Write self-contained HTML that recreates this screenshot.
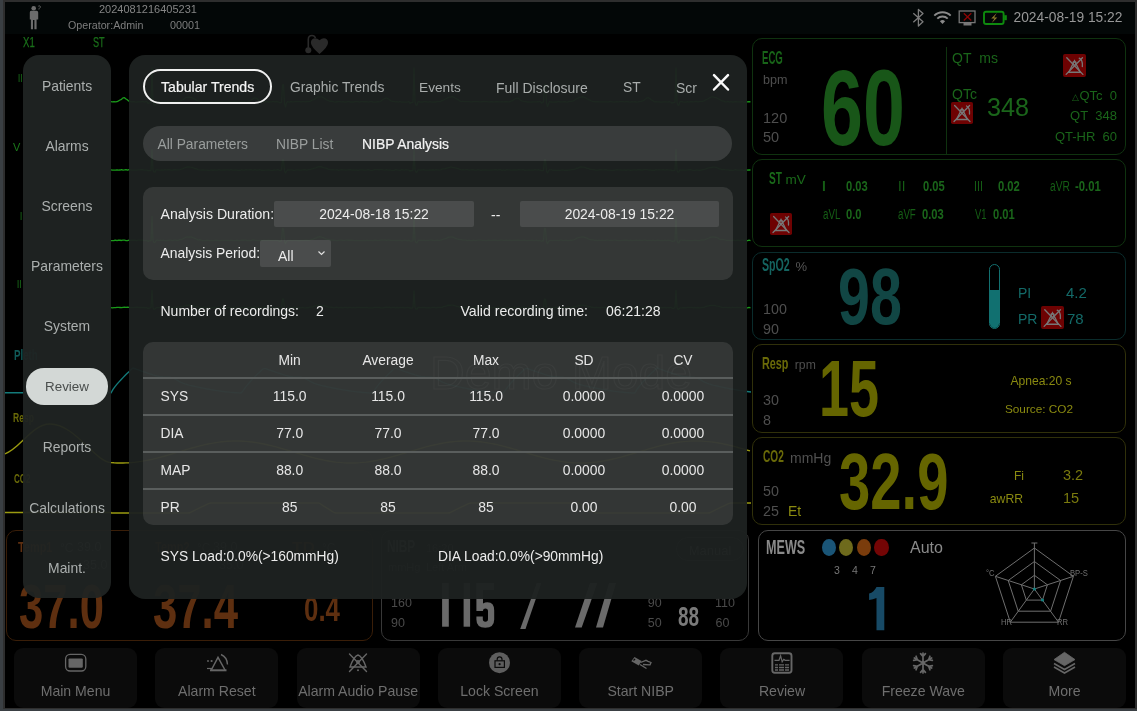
<!DOCTYPE html><html><head><meta charset="utf-8"><style>
html,body{margin:0;padding:0;width:1137px;height:711px;overflow:hidden;background:#2e2e2e;font-family:'Liberation Sans',sans-serif}
.t{position:absolute;white-space:nowrap;line-height:1}
.b{position:absolute;box-sizing:border-box}
svg{position:absolute;overflow:visible}
</style></head><body><div style="position:absolute;left:0;top:0;width:1137px;height:711px;overflow:hidden;will-change:transform">
<div class="b" style="left:0px;top:0px;width:3px;height:711px;background:#3a3f43"></div>
<div class="b" style="left:0px;top:709px;width:1137px;height:2px;background:#3a3f43"></div>
<div class="b" style="left:5px;top:2px;width:1130px;height:706px;background:#000"></div>
<div class="b" style="left:5px;top:2px;width:1130px;height:32px;background:#030707"></div>
<svg style="left:0;top:0" width="1137" height="40"><circle cx="33.7" cy="8.2" r="2.3" fill="#6c6c6c"/><path d="M31 10.8H36.6Q38.2 10.8 38.2 12.4V19.6H36.6V29.3H34.4V20H33V29.3H30.9V19.6H29.8V12.4Q29.8 10.8 31 10.8Z" fill="#6c6c6c"/><path d="M38.3 6.2q1.2-0.8 2 0.2q0.4 1-0.8 1.8q-0.6 0.4-0.6 1.2" stroke="#6c6c6c" stroke-width="0.9" fill="none"/></svg>
<div class="t" style="left:99.0px;top:4.0px;font-size:11px;color:#858585;font-weight:400;">2024081216405231</div>
<div class="t" style="left:68.0px;top:19.8px;font-size:10.7px;color:#7e7e7e;font-weight:400;">Operator:Admin</div>
<div class="t" style="left:170.0px;top:19.7px;font-size:10.8px;color:#7e7e7e;font-weight:400;">00001</div>
<div class="t" style="left:1013.5px;top:11.4px;font-size:13.8px;color:#979797;font-weight:400;">2024-08-19 15:22</div>
<svg style="left:0;top:0" width="1137" height="40"><path d="M913.3 13.2L923 21.8 918.4 26V9.4L923 13.6 913.3 22.3" stroke="#7c7c7c" stroke-width="1.3" fill="none" stroke-linejoin="round"/><path d="M934.3 15.6a11.6 11.6 0 0 1 16.4 0" stroke="#8a8a8a" stroke-width="1.9" fill="none"/><path d="M937.3 18.7a7.3 7.3 0 0 1 10.4 0" stroke="#8a8a8a" stroke-width="1.9" fill="none"/><path d="M939.9 21.3a3.6 3.6 0 0 1 5.2 0l-2.6 2.7z" fill="#8a8a8a"/><rect x="959.2" y="11" width="15.8" height="11.6" fill="none" stroke="#777" stroke-width="1.3"/><rect x="963.5" y="23" width="8" height="2.5" fill="#777"/><path d="M963.8 13.3l7.5 7.2M971.3 13.3l-7.5 7.2" stroke="#8c0505" stroke-width="1.3"/><rect x="984" y="11.7" width="19.6" height="12.3" rx="2" fill="none" stroke="#0e8a0e" stroke-width="1.9"/><rect x="1004.2" y="15.2" width="2.6" height="5" fill="#0e8a0e"/><path d="M996.8 13l-5.6 5.6h3.3l-2.8 4.4 5.6-5.6h-3.2z" fill="#8e7a2a"/></svg>
<svg style="left:0;top:0" width="400" height="60"><path d="M319.5 40.2Q316.5 37.5 313.5 38.5Q310.8 39.5 310.9 43Q311.2 47 319.5 53.9Q327.8 47 328 43Q328.2 39.5 325.5 38.5Q322.5 37.5 319.5 40.2Z" fill="#2a2a2a"/><path d="M308.3 50V39.5Q308.3 35.5 312 35.5Q314.5 35.5 315.5 38" stroke="#2a2a2a" stroke-width="1.6" fill="none"/><circle cx="308.3" cy="50.3" r="3" fill="#2a2a2a"/></svg>
<div class="t" style="left:22.8px;top:34.9px;font-size:14.1px;color:#1a701a;font-weight:400;transform:scaleX(0.682);transform-origin:0 0;-webkit-text-stroke:0.25px #1a701a">X1</div>
<div class="t" style="left:92.6px;top:34.9px;font-size:14.1px;color:#1a701a;font-weight:400;transform:scaleX(0.645);transform-origin:0 0;-webkit-text-stroke:0.25px #1a701a">ST</div>
<svg style="left:0;top:0" width="760" height="711"><g fill="none" stroke-linejoin="round"><path d="M111.0 101.62L112.5 101.83L114.0 101.70L115.5 101.83L117.0 101.70L118.5 100.89L120.0 99.99L121.5 99.33L123.0 97.87L124.5 97.68L126.0 99.03L127.5 99.92L129.0 101.20L130.5 101.50L132.0 101.82L133.5 101.54L135.0 101.89L136.5 102.06L138.0 101.82L139.5 101.97L141.0 101.92L142.5 101.49L144.0 101.98L145.0 101.86L146.0 101.66L147.0 101.47L148.0 103.56L149.0 102.78L150.0 102.95L151.0 102.07L152.0 67.95L153.0 102.09L154.0 105.06L155.0 105.34L156.0 101.76L157.0 102.10L158.0 102.07L159.0 101.52L160.5 101.55L162.0 101.60L163.5 102.13L165.0 101.76L166.5 101.89L168.0 101.66L169.5 101.80L171.0 101.71L172.5 101.68L174.0 101.81L175.5 101.74L177.0 101.82L178.5 101.40L180.0 101.14L181.5 100.46L183.0 99.75L184.5 98.61L186.0 97.40L187.5 97.28L189.0 97.13L190.5 97.31L192.0 97.69L193.5 98.64L195.0 99.20L196.5 100.45L198.0 100.89L199.5 101.12L201.0 101.23L202.5 101.93L204.0 102.09L205.5 101.49L207.0 102.00L208.5 101.74L210.0 101.55L211.5 101.66L213.0 101.99L214.5 102.06L216.0 101.48L217.5 101.88L219.0 101.48L220.5 101.95L222.0 101.68L223.5 102.07L225.0 102.14L226.5 101.80L228.0 102.15L229.5 101.67L231.0 101.50L232.5 101.87L234.0 101.47L235.5 101.59L237.0 101.74L238.5 101.88L240.0 101.56L241.5 101.48L243.0 102.06L244.5 101.67L246.0 102.10L247.5 101.96L249.0 101.29L250.5 100.64L252.0 99.53L253.5 98.43L255.0 97.87L256.5 98.37L258.0 99.60L259.5 100.98L261.0 101.38L262.5 101.63L264.0 101.93L265.5 101.61L267.0 101.66L268.5 102.13L270.0 101.81L271.5 101.83L273.0 101.46L274.5 101.74L275.5 101.86L276.5 101.46L277.5 101.88L278.5 101.89L279.5 102.74L280.5 102.64L281.5 102.28L282.5 84.93L283.5 84.70L284.5 103.61L285.5 106.97L286.5 103.13L287.5 101.49L288.5 101.92L289.5 102.12L290.5 101.63L292.0 101.77L293.5 101.86L295.0 101.67L296.5 101.70L298.0 101.67L299.5 101.71L301.0 101.86L302.5 101.65L304.0 101.69L305.5 101.92L307.0 101.31L308.5 101.51L310.0 101.32L311.5 100.52L313.0 99.77L314.5 99.32L316.0 98.01L317.5 97.18L319.0 96.86L320.5 96.96L322.0 96.91L323.5 97.78L325.0 98.68L326.5 99.92L328.0 100.40L329.5 101.26L331.0 101.15L332.5 101.48L334.0 101.81L335.5 102.03L337.0 101.75L338.5 101.60L340.0 101.53L341.5 101.82L343.0 101.58L344.5 102.01L346.0 102.04L347.5 101.58L349.0 101.65L350.5 102.02L352.0 101.90L353.5 102.01L355.0 101.69L356.5 101.54L358.0 101.65L359.5 102.01L361.0 101.64L362.5 101.69L364.0 101.74L365.5 101.74L367.0 101.74L368.5 102.09L370.0 101.56L371.5 101.45L373.0 102.11L374.5 102.06L376.0 102.13L377.5 101.71L379.0 101.93L380.5 101.50L382.0 100.13L383.5 99.27L385.0 98.28L386.5 97.98L388.0 98.70L389.5 99.79L391.0 100.85L392.5 101.32L394.0 101.42L395.5 101.85L397.0 101.65L398.5 102.02L400.0 101.48L401.5 102.08L403.0 101.94L404.5 102.10L406.0 102.08L407.0 102.08L408.0 101.85L409.0 101.46L410.0 103.47L411.0 102.57L412.0 102.66L413.0 101.91L414.0 67.82L415.0 101.74L416.0 105.44L417.0 105.21L418.0 101.69L419.0 101.63L420.0 102.05L421.0 101.78L422.5 102.00L424.0 101.70L425.5 101.59L427.0 101.82L428.5 102.02L430.0 101.57L431.5 102.00L433.0 102.09L434.5 101.99L436.0 101.98L437.5 101.33L439.0 101.63L440.5 101.53L442.0 100.53L443.5 100.05L445.0 99.24L446.5 98.51L448.0 97.59L449.5 97.01L451.0 96.99L452.5 96.68L454.0 97.33L455.5 98.23L457.0 99.14L458.5 99.91L460.0 101.17L461.5 101.52L463.0 101.25L464.5 101.68L466.0 101.62L467.5 101.65L469.0 101.69L470.5 101.90L472.0 101.86L473.5 101.70L475.0 101.58L476.5 101.68L478.0 101.54L479.5 101.84L481.0 101.95L482.5 101.72L484.0 101.51L485.5 101.57L487.0 101.71L488.5 101.87L490.0 102.00L491.5 101.72L493.0 102.01L494.5 101.89L496.0 101.75L497.5 101.71L499.0 101.80L500.5 101.94L502.0 101.74L503.5 101.94L505.0 101.77L506.5 101.62L508.0 101.80L509.5 101.82L511.0 101.08L512.5 100.62L514.0 99.47L515.5 98.59L517.0 98.11L518.5 98.24L520.0 99.80L521.5 100.88L523.0 101.21L524.5 101.66L526.0 101.51L527.5 102.02L529.0 101.91L530.5 102.07L532.0 102.00L533.5 101.92L535.0 101.96L536.5 101.84L537.5 101.52L538.5 101.86L539.5 101.45L540.5 101.55L541.5 103.24L542.5 102.23L543.5 102.01L544.5 84.52L545.5 85.07L546.5 103.24L547.5 106.47L548.5 103.71L549.5 101.53L550.5 102.04L551.5 101.92L552.5 102.04L554.0 102.12L555.5 101.86L557.0 102.01L558.5 101.48L560.0 101.99L561.5 101.81L563.0 101.95L564.5 101.52L566.0 101.95L567.5 102.04L569.0 101.33L570.5 101.34L572.0 101.20L573.5 100.89L575.0 99.78L576.5 98.88L578.0 98.02L579.5 97.48L581.0 97.08L582.5 96.75L584.0 97.10L585.5 97.83L587.0 98.69L588.5 99.63L590.0 100.15L591.5 101.01L593.0 101.71L594.5 101.53L596.0 101.88L597.5 101.53L599.0 101.92L600.5 101.97L602.0 101.92L603.5 101.81L605.0 101.79L606.5 101.90L608.0 102.08L609.5 101.55L611.0 101.52L612.5 101.97L614.0 102.09L615.5 101.81L617.0 101.76L618.5 101.95L620.0 101.58L621.5 101.64L623.0 101.59L624.5 101.86L626.0 101.67L627.5 101.61L629.0 101.93L630.5 102.12L632.0 101.66L633.5 101.94L635.0 101.74L636.5 102.05L638.0 101.85L639.5 101.59L641.0 101.42L642.5 100.86L644.0 100.31L645.5 99.01L647.0 97.81L648.5 97.76L650.0 98.56L651.5 100.13L653.0 100.71L654.5 101.86L656.0 101.71L657.5 101.86L659.0 101.78L660.5 102.03L662.0 102.03L663.5 101.84L665.0 101.79L666.5 101.95L668.0 102.05L669.0 101.73L670.0 101.96L671.0 102.12L672.0 103.28L673.0 102.61L674.0 102.61L675.0 101.95L676.0 67.92L677.0 102.12L678.0 105.38L679.0 104.95L680.0 101.58L681.0 101.63L682.0 101.58L683.0 101.94L684.5 102.05L686.0 102.08L687.5 101.63L689.0 102.06L690.5 101.67L692.0 101.75L693.5 101.96L695.0 101.50L696.5 101.50L698.0 101.98L699.5 101.53L701.0 101.44L702.5 101.33L704.0 100.97L705.5 99.87L707.0 99.29L708.5 98.45L710.0 97.63L711.5 96.82L713.0 96.86L714.5 97.34L716.0 97.56L717.5 98.52L719.0 99.14L720.5 100.06L722.0 100.96L723.5 101.00L725.0 101.81L726.5 101.96L728.0 101.47L729.5 102.09L731.0 101.71L732.5 101.99L734.0 101.98L735.5 101.66L737.0 101.92L738.5 101.91L740.0 102.01L741.5 101.64L743.0 101.98L744.5 102.12L746.0 101.92L747.5 101.83L749.0 101.53L750.5 101.80" stroke="#1a9a1a" stroke-width="1.3"/><path d="M111.0 169.90L112.5 170.15L114.0 170.12L115.5 170.04L117.0 169.77L118.5 170.07L120.0 170.02L121.5 169.64L123.0 170.09L124.5 169.91L126.0 169.58L127.5 170.21L129.0 169.71L130.5 169.87L132.0 170.15L133.5 170.07L135.0 170.04L136.5 170.10L138.0 169.97L139.5 169.87L141.0 169.77L142.5 169.70L144.0 170.15L145.0 170.18L146.0 170.03L147.0 170.17L148.0 170.80L149.0 170.44L150.0 170.52L151.0 170.26L152.0 149.28L153.0 170.00L154.0 171.82L155.0 172.19L156.0 169.90L157.0 169.88L158.0 169.93L159.0 170.03L160.5 170.19L162.0 169.90L163.5 170.24L165.0 169.73L166.5 169.84L168.0 169.72L169.5 169.73L171.0 170.19L172.5 170.15L174.0 169.75L175.5 169.71L177.0 169.78L178.5 169.85L180.0 169.65L181.5 169.22L183.0 168.63L184.5 167.77L186.0 167.43L187.5 166.92L189.0 167.02L190.5 167.18L192.0 167.29L193.5 167.84L195.0 168.76L196.5 168.72L198.0 169.64L199.5 169.96L201.0 170.16L202.5 169.85L204.0 170.01L205.5 170.05L207.0 170.09L208.5 170.33L210.0 170.13L211.5 169.86L213.0 170.25L214.5 169.99L216.0 170.07L217.5 170.16L219.0 169.65L220.5 170.19L222.0 170.11L223.5 169.99L225.0 170.02L226.5 169.97L228.0 169.79L229.5 170.02L231.0 169.68L232.5 170.00L234.0 170.10L235.5 169.96L237.0 170.05L238.5 170.32L240.0 170.27L241.5 169.74L243.0 170.20L244.5 170.09L246.0 169.68L247.5 169.90L249.0 169.79L250.5 169.65L252.0 169.91L253.5 170.13L255.0 169.68L256.5 170.09L258.0 170.02L259.5 169.69L261.0 170.23L262.5 170.06L264.0 170.30L265.5 170.15L267.0 170.17L268.5 169.89L270.0 170.21L271.5 170.30L273.0 170.25L274.5 169.96L275.5 170.18L276.5 169.99L277.5 169.73L278.5 169.68L279.5 170.45L280.5 170.24L281.5 170.06L282.5 159.80L283.5 159.94L284.5 171.03L285.5 172.95L286.5 171.10L287.5 169.86L288.5 169.98L289.5 170.18L290.5 169.93L292.0 169.78L293.5 170.28L295.0 170.15L296.5 169.91L298.0 169.91L299.5 170.02L301.0 170.07L302.5 169.80L304.0 169.64L305.5 169.76L307.0 170.10L308.5 169.55L310.0 169.58L311.5 169.10L313.0 168.69L314.5 168.15L316.0 167.77L317.5 167.13L319.0 166.73L320.5 166.74L322.0 167.00L323.5 167.66L325.0 167.89L326.5 168.40L328.0 169.15L329.5 169.46L331.0 169.89L332.5 169.56L334.0 169.88L335.5 169.91L337.0 169.66L338.5 170.32L340.0 169.80L341.5 169.72L343.0 169.98L344.5 169.77L346.0 170.09L347.5 169.89L349.0 169.74L350.5 169.69L352.0 170.16L353.5 169.84L355.0 170.20L356.5 169.98L358.0 170.30L359.5 169.86L361.0 169.82L362.5 169.84L364.0 170.22L365.5 170.09L367.0 169.89L368.5 169.72L370.0 170.13L371.5 170.33L373.0 170.06L374.5 169.65L376.0 169.67L377.5 169.71L379.0 169.76L380.5 169.65L382.0 169.61L383.5 169.97L385.0 170.09L386.5 169.59L388.0 170.18L389.5 169.89L391.0 170.17L392.5 170.28L394.0 170.30L395.5 169.67L397.0 169.86L398.5 170.07L400.0 170.31L401.5 169.71L403.0 169.86L404.5 170.24L406.0 169.73L407.0 169.92L408.0 169.88L409.0 170.13L410.0 171.20L411.0 170.37L412.0 170.77L413.0 170.16L414.0 149.83L415.0 170.04L416.0 172.30L417.0 171.90L418.0 169.94L419.0 169.81L420.0 170.20L421.0 169.99L422.5 169.84L424.0 169.77L425.5 170.15L427.0 170.07L428.5 170.15L430.0 169.92L431.5 169.99L433.0 169.75L434.5 170.14L436.0 169.64L437.5 169.90L439.0 170.02L440.5 169.81L442.0 169.14L443.5 168.86L445.0 168.80L446.5 168.12L448.0 167.77L449.5 167.40L451.0 166.96L452.5 167.41L454.0 167.67L455.5 167.90L457.0 168.47L458.5 168.75L460.0 169.36L461.5 170.00L463.0 169.56L464.5 169.98L466.0 169.70L467.5 169.70L469.0 170.10L470.5 169.82L472.0 169.68L473.5 169.76L475.0 170.10L476.5 170.06L478.0 169.66L479.5 169.81L481.0 170.33L482.5 169.80L484.0 170.04L485.5 169.94L487.0 170.20L488.5 170.07L490.0 170.20L491.5 170.02L493.0 169.78L494.5 169.77L496.0 169.71L497.5 170.23L499.0 169.73L500.5 169.67L502.0 170.33L503.5 169.79L505.0 170.28L506.5 169.71L508.0 169.97L509.5 169.80L511.0 170.21L512.5 170.02L514.0 169.99L515.5 170.01L517.0 170.06L518.5 169.72L520.0 169.96L521.5 169.91L523.0 169.71L524.5 170.23L526.0 170.06L527.5 170.22L529.0 169.79L530.5 170.03L532.0 169.97L533.5 170.16L535.0 169.70L536.5 169.89L537.5 169.99L538.5 169.70L539.5 170.04L540.5 170.16L541.5 170.70L542.5 170.55L543.5 170.37L544.5 159.60L545.5 159.70L546.5 171.35L547.5 172.88L548.5 170.95L549.5 169.71L550.5 169.80L551.5 169.77L552.5 170.30L554.0 170.16L555.5 170.26L557.0 170.34L558.5 170.08L560.0 170.30L561.5 170.02L563.0 169.94L564.5 170.31L566.0 170.27L567.5 170.27L569.0 169.89L570.5 169.99L572.0 169.55L573.5 169.66L575.0 169.19L576.5 168.24L578.0 168.14L579.5 167.14L581.0 166.78L582.5 167.17L584.0 167.09L585.5 167.68L587.0 168.30L588.5 168.41L590.0 169.36L591.5 169.37L593.0 169.70L594.5 169.77L596.0 170.11L597.5 170.15L599.0 169.84L600.5 169.72L602.0 169.86L603.5 169.94L605.0 169.70L606.5 169.76L608.0 170.18L609.5 170.14L611.0 170.33L612.5 170.34L614.0 170.26L615.5 169.91L617.0 169.76L618.5 169.87L620.0 169.97L621.5 170.02L623.0 170.03L624.5 169.90L626.0 170.25L627.5 169.85L629.0 169.97L630.5 170.27L632.0 170.21L633.5 169.86L635.0 169.82L636.5 170.21L638.0 169.66L639.5 169.74L641.0 170.01L642.5 169.99L644.0 169.69L645.5 169.55L647.0 169.60L648.5 169.99L650.0 169.82L651.5 170.24L653.0 170.16L654.5 170.32L656.0 169.67L657.5 169.78L659.0 169.66L660.5 169.95L662.0 169.89L663.5 169.69L665.0 170.03L666.5 169.72L668.0 169.87L669.0 169.82L670.0 170.21L671.0 169.94L672.0 170.73L673.0 170.28L674.0 170.55L675.0 170.09L676.0 149.72L677.0 170.29L678.0 172.22L679.0 171.82L680.0 169.74L681.0 170.18L682.0 170.20L683.0 170.01L684.5 170.23L686.0 170.04L687.5 169.85L689.0 169.77L690.5 169.66L692.0 170.10L693.5 170.28L695.0 170.28L696.5 169.97L698.0 170.09L699.5 170.23L701.0 170.06L702.5 169.76L704.0 169.37L705.5 169.06L707.0 168.33L708.5 167.79L710.0 167.63L711.5 167.48L713.0 167.03L714.5 167.07L716.0 167.40L717.5 167.98L719.0 168.77L720.5 169.01L722.0 169.75L723.5 169.44L725.0 169.71L726.5 169.94L728.0 169.91L729.5 170.23L731.0 170.23L732.5 170.30L734.0 170.08L735.5 169.67L737.0 170.05L738.5 170.03L740.0 169.99L741.5 169.85L743.0 170.15L744.5 170.29L746.0 169.72L747.5 170.12L749.0 169.91L750.5 170.01" stroke="#1a9a1a" stroke-width="1.3"/><path d="M111.0 240.68L112.5 240.72L114.0 240.50L115.5 240.18L117.0 240.69L118.5 240.15L120.0 240.24L121.5 240.49L123.0 240.08L124.5 240.04L126.0 240.56L127.5 240.62L129.0 240.23L130.5 240.31L132.0 240.24L133.5 240.14L135.0 240.23L136.5 240.74L138.0 240.11L139.5 240.21L141.0 240.19L142.5 240.11L144.0 240.42L145.0 240.57L146.0 240.64L147.0 240.49L148.0 241.67L149.0 240.75L150.0 240.95L151.0 240.72L152.0 216.30L153.0 240.24L154.0 242.72L155.0 242.57L156.0 240.43L157.0 240.08L158.0 240.22L159.0 240.72L160.5 240.15L162.0 240.68L163.5 240.17L165.0 240.74L166.5 240.52L168.0 240.50L169.5 240.15L171.0 240.08L172.5 240.57L174.0 240.14L175.5 240.10L177.0 240.44L178.5 240.29L180.0 239.41L181.5 239.61L183.0 238.75L184.5 238.00L186.0 237.21L187.5 236.98L189.0 237.24L190.5 236.90L192.0 237.23L193.5 237.84L195.0 238.46L196.5 239.19L198.0 240.02L199.5 239.73L201.0 240.00L202.5 240.62L204.0 240.71L205.5 240.72L207.0 240.22L208.5 240.30L210.0 240.72L211.5 240.39L213.0 240.54L214.5 240.27L216.0 240.06L217.5 240.29L219.0 240.57L220.5 240.60L222.0 240.45L223.5 240.37L225.0 240.43L226.5 240.36L228.0 240.42L229.5 240.63L231.0 240.19L232.5 240.47L234.0 240.70L235.5 240.64L237.0 240.18L238.5 240.72L240.0 240.64L241.5 240.17L243.0 240.24L244.5 240.19L246.0 240.09L247.5 240.73L249.0 240.32L250.5 240.60L252.0 240.02L253.5 239.89L255.0 240.46L256.5 240.43L258.0 240.63L259.5 240.47L261.0 240.40L262.5 240.58L264.0 240.11L265.5 240.43L267.0 240.36L268.5 240.15L270.0 240.47L271.5 240.28L273.0 240.40L274.5 240.31L275.5 240.27L276.5 240.30L277.5 240.47L278.5 240.74L279.5 241.58L280.5 241.18L281.5 240.98L282.5 228.35L283.5 228.83L284.5 241.41L285.5 243.64L286.5 241.57L287.5 240.56L288.5 240.29L289.5 240.50L290.5 240.25L292.0 240.73L293.5 240.37L295.0 240.38L296.5 240.42L298.0 240.66L299.5 240.74L301.0 240.42L302.5 240.35L304.0 240.46L305.5 240.05L307.0 240.24L308.5 240.41L310.0 240.14L311.5 239.29L313.0 239.36L314.5 238.43L316.0 238.21L317.5 237.23L319.0 236.77L320.5 236.95L322.0 237.44L323.5 237.63L325.0 238.56L326.5 239.07L328.0 239.36L329.5 239.71L331.0 240.11L332.5 240.19L334.0 240.25L335.5 240.48L337.0 240.65L338.5 240.46L340.0 240.15L341.5 240.20L343.0 240.31L344.5 240.48L346.0 240.15L347.5 240.11L349.0 240.27L350.5 240.25L352.0 240.07L353.5 240.43L355.0 240.69L356.5 240.42L358.0 240.57L359.5 240.63L361.0 240.64L362.5 240.69L364.0 240.36L365.5 240.53L367.0 240.13L368.5 240.67L370.0 240.31L371.5 240.38L373.0 240.67L374.5 240.25L376.0 240.18L377.5 240.62L379.0 240.46L380.5 240.08L382.0 240.00L383.5 240.16L385.0 239.87L386.5 240.44L388.0 240.02L389.5 240.15L391.0 240.28L392.5 240.39L394.0 240.35L395.5 240.49L397.0 240.51L398.5 240.36L400.0 240.12L401.5 240.74L403.0 240.53L404.5 240.11L406.0 240.36L407.0 240.58L408.0 240.74L409.0 240.10L410.0 241.11L411.0 241.09L412.0 241.05L413.0 240.68L414.0 216.83L415.0 240.28L416.0 242.68L417.0 242.79L418.0 240.67L419.0 240.19L420.0 240.32L421.0 240.11L422.5 240.50L424.0 240.07L425.5 240.70L427.0 240.42L428.5 240.45L430.0 240.11L431.5 240.21L433.0 240.37L434.5 240.64L436.0 240.39L437.5 240.16L439.0 240.55L440.5 240.14L442.0 239.75L443.5 239.08L445.0 238.58L446.5 238.36L448.0 237.23L449.5 237.08L451.0 236.98L452.5 236.96L454.0 237.68L455.5 238.37L457.0 238.97L458.5 239.46L460.0 239.52L461.5 239.72L463.0 240.17L464.5 240.18L466.0 240.15L467.5 240.65L469.0 240.20L470.5 240.62L472.0 240.71L473.5 240.13L475.0 240.69L476.5 240.33L478.0 240.20L479.5 240.18L481.0 240.08L482.5 240.40L484.0 240.32L485.5 240.65L487.0 240.63L488.5 240.09L490.0 240.33L491.5 240.32L493.0 240.17L494.5 240.23L496.0 240.23L497.5 240.54L499.0 240.29L500.5 240.13L502.0 240.20L503.5 240.36L505.0 240.45L506.5 240.22L508.0 240.54L509.5 240.19L511.0 240.50L512.5 240.42L514.0 240.06L515.5 240.40L517.0 240.13L518.5 240.25L520.0 240.35L521.5 240.43L523.0 240.34L524.5 240.08L526.0 240.60L527.5 240.65L529.0 240.39L530.5 240.46L532.0 240.24L533.5 240.68L535.0 240.53L536.5 240.21L537.5 240.62L538.5 240.74L539.5 240.29L540.5 240.75L541.5 241.26L542.5 240.70L543.5 240.90L544.5 228.39L545.5 228.66L546.5 241.63L547.5 243.63L548.5 241.59L549.5 240.65L550.5 240.38L551.5 240.43L552.5 240.65L554.0 240.36L555.5 240.39L557.0 240.46L558.5 240.63L560.0 240.19L561.5 240.11L563.0 240.58L564.5 240.43L566.0 240.24L567.5 240.63L569.0 240.56L570.5 240.19L572.0 240.29L573.5 239.83L575.0 239.29L576.5 238.37L578.0 237.53L579.5 237.44L581.0 237.14L582.5 236.81L584.0 237.16L585.5 237.72L587.0 238.12L588.5 239.06L590.0 239.50L591.5 239.77L593.0 239.83L594.5 240.29L596.0 240.21L597.5 240.53L599.0 240.16L600.5 240.32L602.0 240.19L603.5 240.34L605.0 240.45L606.5 240.12L608.0 240.09L609.5 240.39L611.0 240.19L612.5 240.40L614.0 240.17L615.5 240.12L617.0 240.43L618.5 240.70L620.0 240.66L621.5 240.41L623.0 240.33L624.5 240.10L626.0 240.24L627.5 240.27L629.0 240.71L630.5 240.13L632.0 240.71L633.5 240.38L635.0 240.35L636.5 240.23L638.0 240.72L639.5 240.18L641.0 240.44L642.5 240.38L644.0 240.12L645.5 240.07L647.0 240.55L648.5 240.41L650.0 240.41L651.5 240.59L653.0 240.08L654.5 240.53L656.0 240.57L657.5 240.21L659.0 240.37L660.5 240.73L662.0 240.28L663.5 240.58L665.0 240.17L666.5 240.52L668.0 240.24L669.0 240.41L670.0 240.31L671.0 240.66L672.0 241.62L673.0 241.10L674.0 241.23L675.0 240.35L676.0 216.81L677.0 240.23L678.0 242.76L679.0 242.79L680.0 240.32L681.0 240.08L682.0 240.17L683.0 240.50L684.5 240.20L686.0 240.58L687.5 240.40L689.0 240.72L690.5 240.64L692.0 240.56L693.5 240.31L695.0 240.08L696.5 240.43L698.0 240.54L699.5 240.61L701.0 240.01L702.5 239.79L704.0 240.07L705.5 239.46L707.0 238.71L708.5 238.25L710.0 237.24L711.5 237.09L713.0 237.02L714.5 237.13L716.0 237.25L717.5 237.83L719.0 238.81L720.5 239.56L722.0 239.48L723.5 239.69L725.0 239.92L726.5 240.51L728.0 240.29L729.5 240.36L731.0 240.74L732.5 240.48L734.0 240.23L735.5 240.54L737.0 240.05L738.5 240.25L740.0 240.54L741.5 240.17L743.0 240.07L744.5 240.41L746.0 240.28L747.5 240.73L749.0 240.12L750.5 240.61" stroke="#1a9a1a" stroke-width="1.3"/><path d="M111.0 307.52L112.5 307.81L114.0 307.56L115.5 307.72L117.0 307.47L118.5 307.38L120.0 307.49L121.5 307.67L123.0 307.30L124.5 307.21L126.0 307.39L127.5 307.22L129.0 307.43L130.5 307.64L132.0 307.63L133.5 307.67L135.0 307.45L136.5 307.27L138.0 307.27L139.5 307.49L141.0 307.39L142.5 307.65L144.0 307.44L145.0 307.78L146.0 307.67L147.0 307.71L148.0 308.51L149.0 308.12L150.0 308.05L151.0 307.47L152.0 290.29L153.0 307.81L154.0 309.27L155.0 308.99L156.0 307.90L157.0 307.66L158.0 307.69L159.0 307.56L160.5 307.34L162.0 307.95L163.5 307.37L165.0 307.51L166.5 307.95L168.0 307.34L169.5 307.60L171.0 307.58L172.5 307.41L174.0 307.87L175.5 307.48L177.0 307.13L178.5 307.32L180.0 306.77L181.5 306.95L183.0 306.66L184.5 306.23L186.0 305.20L187.5 305.33L189.0 304.96L190.5 305.19L192.0 305.38L193.5 305.81L195.0 306.14L196.5 306.89L198.0 306.83L199.5 307.66L201.0 307.15L202.5 307.86L204.0 307.36L205.5 307.30L207.0 307.77L208.5 307.62L210.0 307.79L211.5 307.61L213.0 307.69L214.5 307.31L216.0 307.72L217.5 307.61L219.0 307.92L220.5 307.25L222.0 307.30L223.5 307.72L225.0 307.90L226.5 307.55L228.0 307.75L229.5 307.64L231.0 307.52L232.5 307.58L234.0 307.67L235.5 307.27L237.0 307.46L238.5 307.77L240.0 307.43L241.5 307.58L243.0 307.43L244.5 307.50L246.0 307.70L247.5 307.76L249.0 307.90L250.5 307.53L252.0 307.28L253.5 307.31L255.0 307.09L256.5 307.24L258.0 307.55L259.5 307.62L261.0 307.40L262.5 307.37L264.0 307.32L265.5 307.37L267.0 307.60L268.5 307.43L270.0 307.87L271.5 307.65L273.0 307.49L274.5 307.55L275.5 307.28L276.5 307.76L277.5 307.78L278.5 307.50L279.5 308.38L280.5 307.82L281.5 307.65L282.5 298.91L283.5 298.89L284.5 308.51L285.5 310.20L286.5 308.59L287.5 307.32L288.5 307.79L289.5 307.58L290.5 307.51L292.0 307.60L293.5 307.55L295.0 307.39L296.5 307.53L298.0 307.70L299.5 307.75L301.0 307.89L302.5 307.38L304.0 307.86L305.5 307.78L307.0 307.67L308.5 307.77L310.0 307.02L311.5 307.22L313.0 306.96L314.5 305.99L316.0 305.86L317.5 305.71L319.0 305.01L320.5 305.36L322.0 305.58L323.5 305.61L325.0 305.85L326.5 306.35L328.0 307.15L329.5 307.15L331.0 307.26L332.5 307.46L334.0 307.85L335.5 307.41L337.0 307.26L338.5 307.91L340.0 307.47L341.5 307.52L343.0 307.93L344.5 307.45L346.0 307.31L347.5 307.87L349.0 307.42L350.5 307.41L352.0 307.91L353.5 307.41L355.0 307.88L356.5 307.48L358.0 307.46L359.5 307.40L361.0 307.63L362.5 307.64L364.0 307.53L365.5 307.61L367.0 307.46L368.5 307.84L370.0 307.90L371.5 307.78L373.0 307.82L374.5 307.30L376.0 307.42L377.5 307.39L379.0 307.35L380.5 307.90L382.0 307.81L383.5 307.75L385.0 307.45L386.5 307.13L388.0 307.39L389.5 307.20L391.0 307.84L392.5 307.42L394.0 307.45L395.5 307.91L397.0 307.39L398.5 307.90L400.0 307.47L401.5 307.72L403.0 307.32L404.5 307.88L406.0 307.53L407.0 307.49L408.0 307.71L409.0 307.67L410.0 308.18L411.0 307.84L412.0 308.15L413.0 307.27L414.0 290.86L415.0 307.49L416.0 309.04L417.0 309.15L418.0 307.33L419.0 307.47L420.0 307.63L421.0 307.53L422.5 307.48L424.0 307.45L425.5 307.59L427.0 307.80L428.5 307.56L430.0 307.79L431.5 307.59L433.0 307.33L434.5 307.36L436.0 307.82L437.5 307.52L439.0 307.39L440.5 307.35L442.0 307.36L443.5 306.72L445.0 306.30L446.5 305.85L448.0 305.18L449.5 305.24L451.0 305.09L452.5 305.21L454.0 305.49L455.5 305.93L457.0 306.55L458.5 306.59L460.0 307.46L461.5 307.07L463.0 307.72L464.5 307.31L466.0 307.78L467.5 307.42L469.0 307.30L470.5 307.63L472.0 307.84L473.5 307.84L475.0 307.86L476.5 307.94L478.0 307.29L479.5 307.52L481.0 307.32L482.5 307.78L484.0 307.57L485.5 307.77L487.0 307.81L488.5 307.95L490.0 307.72L491.5 307.86L493.0 307.63L494.5 307.31L496.0 307.87L497.5 307.31L499.0 307.31L500.5 307.83L502.0 307.45L503.5 307.71L505.0 307.27L506.5 307.40L508.0 307.75L509.5 307.27L511.0 307.59L512.5 307.85L514.0 307.29L515.5 307.57L517.0 307.57L518.5 307.51L520.0 307.67L521.5 307.68L523.0 307.24L524.5 307.38L526.0 307.62L527.5 307.93L529.0 307.40L530.5 307.66L532.0 307.34L533.5 307.84L535.0 307.56L536.5 307.62L537.5 307.72L538.5 307.35L539.5 307.76L540.5 307.81L541.5 308.48L542.5 307.82L543.5 307.66L544.5 298.87L545.5 299.38L546.5 308.39L547.5 310.02L548.5 308.45L549.5 307.74L550.5 307.47L551.5 307.49L552.5 307.79L554.0 307.79L555.5 307.46L557.0 307.30L558.5 307.90L560.0 307.76L561.5 307.67L563.0 307.53L564.5 307.92L566.0 307.54L567.5 307.37L569.0 307.24L570.5 307.33L572.0 307.35L573.5 306.93L575.0 306.99L576.5 306.36L578.0 305.77L579.5 305.51L581.0 305.22L582.5 305.20L584.0 305.29L585.5 305.67L587.0 306.09L588.5 306.78L590.0 306.71L591.5 307.40L593.0 307.25L594.5 307.74L596.0 307.26L597.5 307.57L599.0 307.55L600.5 307.75L602.0 307.39L603.5 307.43L605.0 307.34L606.5 307.64L608.0 307.65L609.5 307.25L611.0 307.37L612.5 307.39L614.0 307.92L615.5 307.57L617.0 307.65L618.5 307.45L620.0 307.71L621.5 307.82L623.0 307.72L624.5 307.25L626.0 307.56L627.5 307.59L629.0 307.28L630.5 307.80L632.0 307.47L633.5 307.46L635.0 307.69L636.5 307.66L638.0 307.60L639.5 307.85L641.0 307.60L642.5 307.46L644.0 307.22L645.5 307.50L647.0 307.32L648.5 307.43L650.0 307.34L651.5 307.16L653.0 307.23L654.5 307.35L656.0 307.31L657.5 307.85L659.0 307.66L660.5 307.42L662.0 307.75L663.5 307.69L665.0 307.29L666.5 307.78L668.0 307.41L669.0 307.95L670.0 307.35L671.0 307.45L672.0 308.17L673.0 308.35L674.0 308.32L675.0 307.66L676.0 290.35L677.0 307.55L678.0 309.41L679.0 308.96L680.0 307.89L681.0 307.84L682.0 307.90L683.0 307.74L684.5 307.68L686.0 307.93L687.5 307.44L689.0 307.46L690.5 307.34L692.0 307.38L693.5 307.81L695.0 307.31L696.5 307.76L698.0 307.50L699.5 307.80L701.0 307.65L702.5 307.47L704.0 307.36L705.5 306.49L707.0 306.24L708.5 305.85L710.0 305.47L711.5 305.33L713.0 305.37L714.5 305.38L716.0 305.82L717.5 306.08L719.0 306.30L720.5 306.81L722.0 307.30L723.5 307.56L725.0 307.38L726.5 307.44L728.0 307.65L729.5 307.40L731.0 307.86L732.5 307.25L734.0 307.70L735.5 307.59L737.0 307.39L738.5 307.65L740.0 307.58L741.5 307.92L743.0 307.87L744.5 307.66L746.0 307.86L747.5 307.87L749.0 307.37L750.5 307.83" stroke="#1a9a1a" stroke-width="1.3"/><path d="M5 392.8H111L111.0 393.00L113.0 389.33L115.0 386.61L117.0 384.16L119.0 381.87L121.0 379.70L123.0 377.61L125.0 375.59L127.0 373.62L129.0 371.71L131.0 369.84L133.0 368.00L135.0 368.73L137.0 369.45L139.0 370.17L141.0 370.87L143.0 371.57L145.0 372.26L147.0 372.93L149.0 373.60L151.0 374.26L153.0 374.89L155.0 375.47L157.0 375.99L159.0 376.40L161.0 376.68L163.0 376.81L165.0 376.84L167.0 376.86L169.0 377.01L171.0 377.41L173.0 378.10L175.0 379.06L177.0 380.15L179.0 381.27L181.0 382.29L183.0 383.16L185.0 383.90L187.0 384.52L189.0 385.07L191.0 385.57L193.0 386.04L195.0 386.49L197.0 386.93L199.0 387.36L201.0 387.77L203.0 388.17L205.0 388.56L207.0 388.94L209.0 389.30L211.0 389.66L213.0 389.99L215.0 390.32L217.0 390.63L219.0 390.93L221.0 391.21L223.0 391.47L225.0 391.72L227.0 391.95L229.0 392.17L231.0 392.36L233.0 392.54L235.0 392.69L237.0 392.82L239.0 392.92L241.0 392.99L243.0 390.89L245.0 387.92L247.0 385.36L249.0 383.00L251.0 380.77L253.0 378.64L255.0 376.59L257.0 374.60L259.0 372.66L261.0 370.77L263.0 368.91L265.0 368.37L267.0 369.09L269.0 369.81L271.0 370.52L273.0 371.22L275.0 371.91L277.0 372.60L279.0 373.27L281.0 373.93L283.0 374.57L285.0 375.19L287.0 375.74L289.0 376.21L291.0 376.56L293.0 376.76L295.0 376.83L297.0 376.84L299.0 376.91L301.0 377.18L303.0 377.72L305.0 378.55L307.0 379.60L309.0 380.72L311.0 381.79L313.0 382.74L315.0 383.55L317.0 384.22L319.0 384.80L321.0 385.32L323.0 385.81L325.0 386.27L327.0 386.71L329.0 387.14L331.0 387.56L333.0 387.97L335.0 388.37L337.0 388.75L339.0 389.12L341.0 389.48L343.0 389.83L345.0 390.16L347.0 390.48L349.0 390.78L351.0 391.07L353.0 391.34L355.0 391.60L357.0 391.84L359.0 392.06L361.0 392.27L363.0 392.45L365.0 392.62L367.0 392.76L369.0 392.87L371.0 392.96L373.0 393.00L375.0 389.33L377.0 386.61L379.0 384.16L381.0 381.87L383.0 379.70L385.0 377.61L387.0 375.59L389.0 373.62L391.0 371.71L393.0 369.84L395.0 368.00L397.0 368.73L399.0 369.45L401.0 370.17L403.0 370.87L405.0 371.57L407.0 372.26L409.0 372.93L411.0 373.60L413.0 374.26L415.0 374.89L417.0 375.47L419.0 375.99L421.0 376.40L423.0 376.68L425.0 376.81L427.0 376.84L429.0 376.86L431.0 377.01L433.0 377.41L435.0 378.10L437.0 379.06L439.0 380.15L441.0 381.27L443.0 382.29L445.0 383.16L447.0 383.90L449.0 384.52L451.0 385.07L453.0 385.57L455.0 386.04L457.0 386.49L459.0 386.93L461.0 387.36L463.0 387.77L465.0 388.17L467.0 388.56L469.0 388.94L471.0 389.30L473.0 389.66L475.0 389.99L477.0 390.32L479.0 390.63L481.0 390.93L483.0 391.21L485.0 391.47L487.0 391.72L489.0 391.95L491.0 392.17L493.0 392.36L495.0 392.54L497.0 392.69L499.0 392.82L501.0 392.92L503.0 392.99L505.0 390.89L507.0 387.92L509.0 385.36L511.0 383.00L513.0 380.77L515.0 378.64L517.0 376.59L519.0 374.60L521.0 372.66L523.0 370.77L525.0 368.91L527.0 368.37L529.0 369.09L531.0 369.81L533.0 370.52L535.0 371.22L537.0 371.91L539.0 372.60L541.0 373.27L543.0 373.93L545.0 374.57L547.0 375.19L549.0 375.74L551.0 376.21L553.0 376.56L555.0 376.76L557.0 376.83L559.0 376.84L561.0 376.91L563.0 377.18L565.0 377.72L567.0 378.55L569.0 379.60L571.0 380.72L573.0 381.79L575.0 382.74L577.0 383.55L579.0 384.22L581.0 384.80L583.0 385.32L585.0 385.81L587.0 386.27L589.0 386.71L591.0 387.14L593.0 387.56L595.0 387.97L597.0 388.37L599.0 388.75L601.0 389.12L603.0 389.48L605.0 389.83L607.0 390.16L609.0 390.48L611.0 390.78L613.0 391.07L615.0 391.34L617.0 391.60L619.0 391.84L621.0 392.06L623.0 392.27L625.0 392.45L627.0 392.62L629.0 392.76L631.0 392.87L633.0 392.96L635.0 393.00L637.0 389.33L639.0 386.61L641.0 384.16L643.0 381.87L645.0 379.70L647.0 377.61L649.0 375.59L651.0 373.62L653.0 371.71L655.0 369.84L657.0 368.00L659.0 368.73L661.0 369.45L663.0 370.17L665.0 370.87L667.0 371.57L669.0 372.26L671.0 372.93L673.0 373.60L675.0 374.26L677.0 374.89L679.0 375.47L681.0 375.99L683.0 376.40L685.0 376.68L687.0 376.81L689.0 376.84L691.0 376.86L693.0 377.01L695.0 377.41L697.0 378.10L699.0 379.06L701.0 380.15L703.0 381.27L705.0 382.29L707.0 383.16L709.0 383.90L711.0 384.52L713.0 385.07L715.0 385.57L717.0 386.04L719.0 386.49L721.0 386.93L723.0 387.36L725.0 387.77L727.0 388.17L729.0 388.56L731.0 388.94L733.0 389.30L735.0 389.66L737.0 389.99L739.0 390.32L741.0 390.63L743.0 390.93L745.0 391.21L747.0 391.47L749.0 391.72L751.0 391.95" stroke="#137a7a" stroke-width="1.4"/><path d="M5 453.8C20 449 32 424 50 424C75 424 95 462 111 462.6L111.0 462.59L114.0 462.80L117.0 462.93L120.0 463.00L123.0 462.98L126.0 462.90L129.0 462.74L132.0 462.51L135.0 462.21L138.0 461.83L141.0 461.40L144.0 460.90L147.0 460.34L150.0 459.72L153.0 459.06L156.0 458.34L159.0 457.59L162.0 456.79L165.0 455.97L168.0 455.11L171.0 454.24L174.0 453.35L177.0 452.45L180.0 451.55L183.0 450.65L186.0 449.76L189.0 448.89L192.0 448.03L195.0 447.21L198.0 446.41L201.0 445.66L204.0 444.94L207.0 444.28L210.0 443.66L213.0 443.10L216.0 442.60L219.0 442.17L222.0 441.79L225.0 441.49L228.0 441.26L231.0 441.10L234.0 441.02L237.0 441.00L240.0 441.07L243.0 441.20L246.0 441.41L249.0 441.69L252.0 442.03L255.0 442.45L258.0 442.93L261.0 443.47L264.0 444.06L267.0 444.71L270.0 445.41L273.0 446.16L276.0 446.94L279.0 447.76L282.0 448.60L285.0 449.47L288.0 450.35L291.0 451.25L294.0 452.15L297.0 453.05L300.0 453.94L303.0 454.82L306.0 455.68L309.0 456.52L312.0 457.33L315.0 458.10L318.0 458.82L321.0 459.51L324.0 460.14L327.0 460.72L330.0 461.24L333.0 461.70L336.0 462.09L339.0 462.41L342.0 462.67L345.0 462.85L348.0 462.96L351.0 463.00L354.0 462.96L357.0 462.85L360.0 462.67L363.0 462.41L366.0 462.09L369.0 461.70L372.0 461.24L375.0 460.72L378.0 460.14L381.0 459.51L384.0 458.82L387.0 458.10L390.0 457.33L393.0 456.52L396.0 455.68L399.0 454.82L402.0 453.94L405.0 453.05L408.0 452.15L411.0 451.25L414.0 450.35L417.0 449.47L420.0 448.60L423.0 447.76L426.0 446.94L429.0 446.16L432.0 445.41L435.0 444.71L438.0 444.06L441.0 443.47L444.0 442.93L447.0 442.45L450.0 442.03L453.0 441.69L456.0 441.41L459.0 441.20L462.0 441.07L465.0 441.00L468.0 441.02L471.0 441.10L474.0 441.26L477.0 441.49L480.0 441.79L483.0 442.17L486.0 442.60L489.0 443.10L492.0 443.66L495.0 444.28L498.0 444.94L501.0 445.66L504.0 446.41L507.0 447.21L510.0 448.03L513.0 448.89L516.0 449.76L519.0 450.65L522.0 451.55L525.0 452.45L528.0 453.35L531.0 454.24L534.0 455.11L537.0 455.97L540.0 456.79L543.0 457.59L546.0 458.34L549.0 459.06L552.0 459.72L555.0 460.34L558.0 460.90L561.0 461.40L564.0 461.83L567.0 462.21L570.0 462.51L573.0 462.74L576.0 462.90L579.0 462.98L582.0 463.00L585.0 462.93L588.0 462.80L591.0 462.59L594.0 462.31L597.0 461.97L600.0 461.55L603.0 461.07L606.0 460.53L609.0 459.94L612.0 459.29L615.0 458.59L618.0 457.84L621.0 457.06L624.0 456.24L627.0 455.40L630.0 454.53L633.0 453.65L636.0 452.75L639.0 451.85L642.0 450.95L645.0 450.06L648.0 449.18L651.0 448.32L654.0 447.48L657.0 446.67L660.0 445.90L663.0 445.18L666.0 444.49L669.0 443.86L672.0 443.28L675.0 442.76L678.0 442.30L681.0 441.91L684.0 441.59L687.0 441.33L690.0 441.15L693.0 441.04L696.0 441.00L699.0 441.04L702.0 441.15L705.0 441.33L708.0 441.59L711.0 441.91L714.0 442.30L717.0 442.76L720.0 443.28L723.0 443.86L726.0 444.49L729.0 445.18L732.0 445.90L735.0 446.67L738.0 447.48L741.0 448.32L744.0 449.18L747.0 450.06L750.0 450.95" stroke="#9a9a10" stroke-width="1.4"/><path d="M5 512.5H111L111.0 513.00L113.0 513.00L115.0 513.00L117.0 513.00L119.0 513.00L121.0 513.00L123.0 513.00L125.0 513.00L127.0 513.00L129.0 513.00L131.0 513.00L133.0 513.00L135.0 513.00L137.0 513.00L139.0 513.00L141.0 513.00L143.0 513.00L145.0 513.00L147.0 513.00L149.0 513.00L151.0 513.00L153.0 513.00L155.0 513.00L157.0 513.00L159.0 513.00L161.0 513.00L163.0 513.00L165.0 513.00L167.0 513.00L169.0 513.00L171.0 513.00L173.0 513.00L175.0 513.00L177.0 513.00L179.0 513.00L181.0 513.00L183.0 513.00L185.0 513.00L187.0 513.00L189.0 513.00L191.0 512.04L193.0 511.08L195.0 510.12L197.0 509.15L199.0 508.19L201.0 507.23L203.0 506.27L205.0 505.31L207.0 504.35L209.0 503.38L211.0 503.00L213.0 503.00L215.0 503.00L217.0 503.00L219.0 503.00L221.0 503.00L223.0 503.00L225.0 503.00L227.0 503.00L229.0 503.00L231.0 503.00L233.0 503.00L235.0 503.00L237.0 503.00L239.0 503.00L241.0 503.00L243.0 503.00L245.0 503.00L247.0 503.00L249.0 503.00L251.0 503.00L253.0 503.00L255.0 503.00L257.0 503.00L259.0 503.00L261.0 503.00L263.0 503.00L265.0 503.00L267.0 503.00L269.0 503.00L271.0 503.00L273.0 503.00L275.0 503.00L277.0 503.00L279.0 503.00L281.0 503.00L283.0 503.00L285.0 503.00L287.0 503.00L289.0 503.00L291.0 503.00L293.0 503.00L295.0 503.00L297.0 503.00L299.0 503.00L301.0 503.00L303.0 503.00L305.0 503.00L307.0 503.00L309.0 503.00L311.0 503.00L313.0 503.00L315.0 503.00L317.0 503.00L319.0 503.00L321.0 504.28L323.0 505.56L325.0 506.85L327.0 508.13L329.0 509.41L331.0 510.69L333.0 511.97L335.0 513.00L337.0 513.00L339.0 513.00L341.0 513.00L343.0 513.00L345.0 513.00L347.0 513.00L349.0 513.00L351.0 513.00L353.0 513.00L355.0 513.00L357.0 513.00L359.0 513.00L361.0 513.00L363.0 513.00L365.0 513.00L367.0 513.00L369.0 513.00L371.0 513.00L373.0 513.00L375.0 513.00L377.0 513.00L379.0 513.00L381.0 513.00L383.0 513.00L385.0 513.00L387.0 513.00L389.0 513.00L391.0 513.00L393.0 513.00L395.0 513.00L397.0 513.00L399.0 513.00L401.0 513.00L403.0 513.00L405.0 513.00L407.0 513.00L409.0 513.00L411.0 513.00L413.0 513.00L415.0 513.00L417.0 513.00L419.0 513.00L421.0 513.00L423.0 513.00L425.0 513.00L427.0 513.00L429.0 513.00L431.0 513.00L433.0 513.00L435.0 513.00L437.0 513.00L439.0 513.00L441.0 513.00L443.0 513.00L445.0 513.00L447.0 513.00L449.0 513.00L451.0 512.04L453.0 511.08L455.0 510.12L457.0 509.15L459.0 508.19L461.0 507.23L463.0 506.27L465.0 505.31L467.0 504.35L469.0 503.38L471.0 503.00L473.0 503.00L475.0 503.00L477.0 503.00L479.0 503.00L481.0 503.00L483.0 503.00L485.0 503.00L487.0 503.00L489.0 503.00L491.0 503.00L493.0 503.00L495.0 503.00L497.0 503.00L499.0 503.00L501.0 503.00L503.0 503.00L505.0 503.00L507.0 503.00L509.0 503.00L511.0 503.00L513.0 503.00L515.0 503.00L517.0 503.00L519.0 503.00L521.0 503.00L523.0 503.00L525.0 503.00L527.0 503.00L529.0 503.00L531.0 503.00L533.0 503.00L535.0 503.00L537.0 503.00L539.0 503.00L541.0 503.00L543.0 503.00L545.0 503.00L547.0 503.00L549.0 503.00L551.0 503.00L553.0 503.00L555.0 503.00L557.0 503.00L559.0 503.00L561.0 503.00L563.0 503.00L565.0 503.00L567.0 503.00L569.0 503.00L571.0 503.00L573.0 503.00L575.0 503.00L577.0 503.00L579.0 503.00L581.0 504.28L583.0 505.56L585.0 506.85L587.0 508.13L589.0 509.41L591.0 510.69L593.0 511.97L595.0 513.00L597.0 513.00L599.0 513.00L601.0 513.00L603.0 513.00L605.0 513.00L607.0 513.00L609.0 513.00L611.0 513.00L613.0 513.00L615.0 513.00L617.0 513.00L619.0 513.00L621.0 513.00L623.0 513.00L625.0 513.00L627.0 513.00L629.0 513.00L631.0 513.00L633.0 513.00L635.0 513.00L637.0 513.00L639.0 513.00L641.0 513.00L643.0 513.00L645.0 513.00L647.0 513.00L649.0 513.00L651.0 513.00L653.0 513.00L655.0 513.00L657.0 513.00L659.0 513.00L661.0 513.00L663.0 513.00L665.0 513.00L667.0 513.00L669.0 513.00L671.0 513.00L673.0 513.00L675.0 513.00L677.0 513.00L679.0 513.00L681.0 513.00L683.0 513.00L685.0 513.00L687.0 513.00L689.0 513.00L691.0 513.00L693.0 513.00L695.0 513.00L697.0 513.00L699.0 513.00L701.0 513.00L703.0 513.00L705.0 513.00L707.0 513.00L709.0 513.00L711.0 512.04L713.0 511.08L715.0 510.12L717.0 509.15L719.0 508.19L721.0 507.23L723.0 506.27L725.0 505.31L727.0 504.35L729.0 503.38L731.0 503.00L733.0 503.00L735.0 503.00L737.0 503.00L739.0 503.00L741.0 503.00L743.0 503.00L745.0 503.00L747.0 503.00L749.0 503.00L751.0 503.00" stroke="#9a9a10" stroke-width="1.4"/></g></svg>
<div class="t" style="left:18.0px;top:72.5px;font-size:11px;color:#1b7a1b;font-weight:400;transform:scaleX(0.7);transform-origin:0 0">II</div>
<div class="t" style="left:13.0px;top:141.5px;font-size:11px;color:#1b7a1b;font-weight:400;">V</div>
<div class="t" style="left:20.0px;top:210.5px;font-size:11px;color:#1b7a1b;font-weight:400;transform:scaleX(0.7);transform-origin:0 0">I</div>
<div class="t" style="left:16.5px;top:279.1px;font-size:11px;color:#1b7a1b;font-weight:400;transform:scaleX(0.7);transform-origin:0 0">II</div>
<div class="t" style="left:13.9px;top:348.4px;font-size:14.1px;color:#105a58;font-weight:700;transform:scaleX(0.689);transform-origin:0 0;">Pleth</div>
<div class="t" style="left:13.4px;top:411.4px;font-size:13.5px;color:#6a6a08;font-weight:700;transform:scaleX(0.632);transform-origin:0 0;">Resp</div>
<div class="t" style="left:13.7px;top:472.0px;font-size:13.2px;color:#6a6a08;font-weight:700;transform:scaleX(0.612);transform-origin:0 0;">CO2</div>
<div class="b" style="left:6px;top:530px;width:367px;height:111px;border:1px solid #3a1e08;border-radius:10px"></div>
<div class="t" style="left:17.9px;top:538.7px;font-size:15.5px;color:#5e2f10;font-weight:700;transform:scaleX(0.705);transform-origin:0 0;">Temp1</div>
<div class="t" style="left:60.0px;top:541.7px;font-size:12px;color:#4e4e4e;font-weight:400;">°C</div>
<div class="t" style="left:77.0px;top:541.2px;font-size:12.5px;color:#4e4e4e;font-weight:400;">39.0</div>
<div class="t" style="left:83.0px;top:559.2px;font-size:12.5px;color:#4e4e4e;font-weight:400;">35.0</div>
<div class="t" style="left:154.9px;top:538.7px;font-size:15.5px;color:#5e2f10;font-weight:700;transform:scaleX(0.708);transform-origin:0 0;">Temp2</div>
<div class="t" style="left:197.0px;top:541.7px;font-size:12px;color:#4e4e4e;font-weight:400;">°C</div>
<div class="t" style="left:213.0px;top:541.2px;font-size:12.5px;color:#4e4e4e;font-weight:400;">39.0</div>
<div class="t" style="left:219.0px;top:559.2px;font-size:12.5px;color:#4e4e4e;font-weight:400;">35.0</div>
<div class="t" style="left:291.8px;top:538.7px;font-size:15.5px;color:#5e2f10;font-weight:700;transform:scaleX(1.109);transform-origin:0 0;">TD</div>
<div class="t" style="left:322.0px;top:541.7px;font-size:12px;color:#4e4e4e;font-weight:400;">°C</div>
<div class="t" style="left:387.2px;top:538.5px;font-size:16.9px;color:#6a6a6a;font-weight:700;transform:scaleX(0.698);transform-origin:0 0;">NIBP</div>
<div class="t" style="left:388.0px;top:561.5px;font-size:11px;color:#4e4e4e;font-weight:400;">mmHg</div>
<div class="t" style="left:426.0px;top:561.5px;font-size:11px;color:#4e4e4e;font-weight:400;">Left Arm</div>
<div class="t" style="left:426.0px;top:542.5px;font-size:11px;color:#4e4e4e;font-weight:400;">16:20</div>
<div class="b" style="left:676px;top:537px;width:68px;height:24px;border:1px solid #3a3a3a;border-radius:12px"></div>
<div class="t" style="left:670.0px;width:80px;text-align:center;top:543.8px;font-size:13px;color:#6a6a6a;font-weight:400;">Manual</div>
<div class="t" style="left:18.9px;top:574.6px;font-size:62.7px;color:#5e2f10;font-weight:700;transform:scaleX(0.696);transform-origin:0 0;">37.0</div>
<div class="t" style="left:153.2px;top:574.6px;font-size:62.7px;color:#5e2f10;font-weight:700;transform:scaleX(0.697);transform-origin:0 0;">37.4</div>
<div class="t" style="left:303.6px;top:590.7px;font-size:35.2px;color:#5e2f10;font-weight:700;transform:scaleX(0.735);transform-origin:0 0;">0.4</div>
<div class="b" style="left:381px;top:530px;width:368px;height:111px;border:1px solid #383838;border-radius:10px"></div>
<div class="t" style="left:391.0px;top:597.2px;font-size:12.5px;color:#4a4a4a;font-weight:400;">160</div>
<div class="t" style="left:391.0px;top:616.8px;font-size:12.5px;color:#4a4a4a;font-weight:400;">90</div>
<svg style="left:0;top:0" width="1137" height="711"><g fill="#6a6a6a"><rect x="442.1" y="583" width="6.7" height="43.7"/><rect x="463.6" y="583" width="6.5" height="43.7"/><path d="M476.4 583H494.2V590H483V603.5Q485 602.3 487.5 602.3Q494.2 602.3 494.2 610.5V619.5Q494.2 627.7 485.3 627.7Q476.4 627.7 476.4 619.5V616.5H482.8V619Q482.8 621.8 485.4 621.8Q488 621.8 488 619V611.3Q488 608.6 485.4 608.6Q483.2 608.6 482.8 611H476.4Z"/><path d="M536.7 583H541.3L525.5 629H520.2Z"/><path d="M590 583H597.3L581.7 627.6H575Z"/><path d="M609 583H616L603 627.6H596Z"/></g></svg>
<div class="t" style="left:647.8px;top:597.2px;font-size:12.5px;color:#4a4a4a;font-weight:400;">90</div>
<div class="t" style="left:647.8px;top:616.9px;font-size:12.5px;color:#4a4a4a;font-weight:400;">50</div>
<div class="t" style="left:678.4px;top:604.3px;font-size:27.0px;color:#7a7a7a;font-weight:700;transform:scaleX(0.704);transform-origin:0 0;">88</div>
<div class="t" style="left:715.0px;top:597.2px;font-size:12.5px;color:#4a4a4a;font-weight:400;">110</div>
<div class="t" style="left:715.5px;top:616.9px;font-size:12.5px;color:#4a4a4a;font-weight:400;">60</div>
<div class="b" style="left:752px;top:38px;width:374px;height:117px;border:1px solid #0f320f;border-radius:10px"></div>
<div class="b" style="left:946px;top:47px;width:1px;height:107px;background:#0f320f"></div>
<div class="t" style="left:762.1px;top:48.5px;font-size:18.0px;color:#186418;font-weight:700;transform:scaleX(0.533);transform-origin:0 0;">ECG</div>
<div class="t" style="left:763.0px;top:74.2px;font-size:12.6px;color:#4e4e4e;font-weight:400;">bpm</div>
<div class="t" style="left:763.0px;top:110.5px;font-size:14.5px;color:#4e4e4e;font-weight:400;">120</div>
<div class="t" style="left:763.0px;top:130.2px;font-size:14.5px;color:#4e4e4e;font-weight:400;">50</div>
<div class="t" style="left:821.4px;top:54.9px;font-size:107.0px;color:#185618;font-weight:700;transform:scaleX(0.704);transform-origin:0 0;">60</div>
<div class="t" style="left:952.0px;top:51.0px;font-size:14px;color:#1a651a;font-weight:400;">QT&nbsp; ms</div>
<div class="t" style="left:952.0px;top:87.0px;font-size:14px;color:#1a651a;font-weight:400;">QTc</div>
<div class="t" style="left:987.0px;top:94.8px;font-size:25.2px;color:#1a651a;font-weight:400;">348</div>
<div class="t" style="left:817.0px;width:300px;text-align:right;top:88.8px;font-size:13px;color:#1a651a;font-weight:400;"><span style="font-size:9px">△</span>QTc&nbsp; 0</div>
<div class="t" style="left:817.0px;width:300px;text-align:right;top:108.8px;font-size:13px;color:#1a651a;font-weight:400;">QT&nbsp; 348</div>
<div class="t" style="left:817.0px;width:300px;text-align:right;top:129.8px;font-size:13px;color:#1a651a;font-weight:400;">QT-HR&nbsp; 60</div>
<svg style="left:1063px;top:54px" width="23" height="23" viewBox="0 0 22 22"><rect width="22" height="22" rx="1.8" fill="#6e0202"/><g stroke="#777" stroke-width="1.3" fill="none" stroke-linecap="round"><path d="M3.6 3.5L19 19.5M18.6 3.5L3 19.5"/><path d="M11 6.5L5.5 17.5H16.5Z"/><circle cx="11" cy="9" r="1.6"/><path d="M15.5 4q3.5 1.5 3 8"/></g></svg>
<svg style="left:951px;top:102px" width="22" height="22" viewBox="0 0 22 22"><rect width="22" height="22" rx="1.8" fill="#6e0202"/><g stroke="#777" stroke-width="1.3" fill="none" stroke-linecap="round"><path d="M3.6 3.5L19 19.5M18.6 3.5L3 19.5"/><path d="M11 6.5L5.5 17.5H16.5Z"/><circle cx="11" cy="9" r="1.6"/><path d="M15.5 4q3.5 1.5 3 8"/></g></svg>
<div class="b" style="left:752px;top:159px;width:374px;height:88px;border:1px solid #0f320f;border-radius:10px"></div>
<div class="t" style="left:769.2px;top:169.8px;font-size:17.0px;color:#1a6a1a;font-weight:700;transform:scaleX(0.594);transform-origin:0 0;">ST</div>
<div class="t" style="left:785.5px;top:172.9px;font-size:13.5px;color:#1a6a1a;font-weight:400;">mV</div>
<svg style="left:770px;top:213px" width="22" height="22" viewBox="0 0 22 22"><rect width="22" height="22" rx="1.8" fill="#6e0202"/><g stroke="#777" stroke-width="1.3" fill="none" stroke-linecap="round"><path d="M3.6 3.5L19 19.5M18.6 3.5L3 19.5"/><path d="M11 6.5L5.5 17.5H16.5Z"/><circle cx="11" cy="9" r="1.6"/><path d="M15.5 4q3.5 1.5 3 8"/></g></svg>
<div class="t" style="left:821.1px;top:178.3px;font-size:15.2px;color:#155e15;font-weight:400;transform:scaleX(1.384);transform-origin:0 0;">I</div>
<div class="t" style="left:846.1px;top:178.3px;font-size:15.2px;color:#1a651a;font-weight:700;transform:scaleX(0.735);transform-origin:0 0;">0.03</div>
<div class="t" style="left:897.8px;top:178.3px;font-size:15.2px;color:#155e15;font-weight:400;transform:scaleX(0.877);transform-origin:0 0;">II</div>
<div class="t" style="left:922.6px;top:178.3px;font-size:15.2px;color:#1a651a;font-weight:700;transform:scaleX(0.734);transform-origin:0 0;">0.05</div>
<div class="t" style="left:974.0px;top:178.3px;font-size:15.2px;color:#155e15;font-weight:400;transform:scaleX(0.708);transform-origin:0 0;">III</div>
<div class="t" style="left:997.5px;top:178.3px;font-size:15.2px;color:#1a651a;font-weight:700;transform:scaleX(0.740);transform-origin:0 0;">0.02</div>
<div class="t" style="left:1049.5px;top:178.3px;font-size:15.2px;color:#155e15;font-weight:400;transform:scaleX(0.673);transform-origin:0 0;">aVR</div>
<div class="t" style="left:1074.5px;top:178.3px;font-size:15.2px;color:#1a651a;font-weight:700;transform:scaleX(0.742);transform-origin:0 0;">-0.01</div>
<div class="t" style="left:822.6px;top:205.7px;font-size:15.2px;color:#155e15;font-weight:400;transform:scaleX(0.644);transform-origin:0 0;">aVL</div>
<div class="t" style="left:846.1px;top:205.7px;font-size:15.2px;color:#1a651a;font-weight:700;transform:scaleX(0.733);transform-origin:0 0;">0.0</div>
<div class="t" style="left:897.6px;top:205.7px;font-size:15.2px;color:#155e15;font-weight:400;transform:scaleX(0.639);transform-origin:0 0;">aVF</div>
<div class="t" style="left:921.6px;top:205.7px;font-size:15.2px;color:#1a651a;font-weight:700;transform:scaleX(0.738);transform-origin:0 0;">0.03</div>
<div class="t" style="left:975.0px;top:205.7px;font-size:15.2px;color:#155e15;font-weight:400;transform:scaleX(0.621);transform-origin:0 0;">V1</div>
<div class="t" style="left:992.6px;top:205.7px;font-size:15.2px;color:#1a651a;font-weight:700;transform:scaleX(0.734);transform-origin:0 0;">0.01</div>
<div class="b" style="left:752px;top:252px;width:374px;height:88px;border:1px solid #0a2c2c;border-radius:10px"></div>
<div class="t" style="left:762.1px;top:256.8px;font-size:17.9px;color:#146460;font-weight:700;transform:scaleX(0.594);transform-origin:0 0;">SpO2</div>
<div class="t" style="left:795.5px;top:260.3px;font-size:13px;color:#555;font-weight:400;">%</div>
<div class="t" style="left:763.0px;top:302.3px;font-size:14.3px;color:#4e4e4e;font-weight:400;">100</div>
<div class="t" style="left:763.0px;top:321.6px;font-size:14.3px;color:#4e4e4e;font-weight:400;">90</div>
<div class="t" style="left:838.0px;top:256.0px;font-size:80.3px;color:#114644;font-weight:700;transform:scaleX(0.715);transform-origin:0 0;">98</div>
<div class="b" style="left:989px;top:264px;width:11px;height:65px;border:1.2px solid #137070;border-radius:6px"></div>
<div class="b" style="left:990px;top:290px;width:9px;height:38px;background:#117070;border-radius:0 0 5px 5px"></div>
<div class="t" style="left:1018.0px;top:286.0px;font-size:14px;color:#136a68;font-weight:400;">PI</div>
<div class="t" style="left:1066.0px;top:285.1px;font-size:15px;color:#136a68;font-weight:400;">4.2</div>
<div class="t" style="left:1018.0px;top:312.0px;font-size:14px;color:#136a68;font-weight:400;">PR</div>
<svg style="left:1041px;top:306px" width="23" height="23" viewBox="0 0 22 22"><rect width="22" height="22" rx="1.8" fill="#6e0202"/><g stroke="#777" stroke-width="1.3" fill="none" stroke-linecap="round"><path d="M3.6 3.5L19 19.5M18.6 3.5L3 19.5"/><path d="M11 6.5L5.5 17.5H16.5Z"/><circle cx="11" cy="9" r="1.6"/><path d="M15.5 4q3.5 1.5 3 8"/></g></svg>
<div class="t" style="left:1067.0px;top:311.1px;font-size:15px;color:#136a68;font-weight:400;">78</div>
<div class="b" style="left:752px;top:344px;width:374px;height:89px;border:1px solid #30300a;border-radius:10px"></div>
<div class="t" style="left:762.0px;top:355.4px;font-size:16.5px;color:#6a6a08;font-weight:700;transform:scaleX(0.656);transform-origin:0 0;">Resp</div>
<div class="t" style="left:794.8px;top:359.1px;font-size:12.2px;color:#4e4e4e;font-weight:400;">rpm</div>
<div class="t" style="left:763.0px;top:393.1px;font-size:14.3px;color:#4e4e4e;font-weight:400;">30</div>
<div class="t" style="left:763.0px;top:412.7px;font-size:14.3px;color:#4e4e4e;font-weight:400;">8</div>
<div class="t" style="left:818.5px;top:348.0px;font-size:80.3px;color:#656500;font-weight:700;transform:scaleX(0.672);transform-origin:0 0;">15</div>
<div class="t" style="left:891.0px;width:300px;text-align:center;top:374.6px;font-size:12.1px;color:#8a8a10;font-weight:400;">Apnea:20 s</div>
<div class="t" style="left:889.0px;width:300px;text-align:center;top:403.9px;font-size:11.8px;color:#8a8a10;font-weight:400;">Source: CO2</div>
<div class="b" style="left:752px;top:437px;width:374px;height:88px;border:1px solid #30300a;border-radius:10px"></div>
<div class="t" style="left:762.6px;top:448.5px;font-size:16.9px;color:#6a6a08;font-weight:700;transform:scaleX(0.599);transform-origin:0 0;">CO2</div>
<div class="t" style="left:790.0px;top:451.0px;font-size:14px;color:#505050;font-weight:400;">mmHg</div>
<div class="t" style="left:763.0px;top:483.7px;font-size:14.3px;color:#4e4e4e;font-weight:400;">50</div>
<div class="t" style="left:763.0px;top:503.5px;font-size:14.3px;color:#4e4e4e;font-weight:400;">25</div>
<div class="t" style="left:788.0px;top:504.0px;font-size:14px;color:#8a8a10;font-weight:400;">Et</div>
<div class="t" style="left:838.6px;top:441.0px;font-size:80.3px;color:#656500;font-weight:700;transform:scaleX(0.700);transform-origin:0 0;">32.9</div>
<div class="t" style="left:724.0px;width:300px;text-align:right;top:469.7px;font-size:12px;color:#8a8a10;font-weight:400;">Fi</div>
<div class="t" style="left:1063.0px;top:468.0px;font-size:14.5px;color:#7a7a0e;font-weight:400;">3.2</div>
<div class="t" style="left:723.0px;width:300px;text-align:right;top:492.5px;font-size:12.2px;color:#8a8a10;font-weight:400;">awRR</div>
<div class="t" style="left:1063.0px;top:491.0px;font-size:14.5px;color:#7a7a0e;font-weight:400;">15</div>
<div class="b" style="left:758px;top:530px;width:368px;height:111px;border:1px solid #464646;border-radius:10px"></div>
<div class="t" style="left:766.2px;top:535.8px;font-size:21.1px;color:#8a8a8a;font-weight:700;transform:scaleX(0.598);transform-origin:0 0;">MEWS</div>
<div class="b" style="left:821.5px;top:538.5px;width:14.400000000000091px;height:17.5px;background:#1a5577;border-radius:50%"></div>
<div class="b" style="left:838.8px;top:538.5px;width:14.400000000000091px;height:17.5px;background:#6e6a1c;border-radius:50%"></div>
<div class="b" style="left:856.8px;top:538.5px;width:14.400000000000091px;height:17.5px;background:#7a3c0c;border-radius:50%"></div>
<div class="b" style="left:874.3px;top:538.5px;width:14.400000000000091px;height:17.5px;background:#740505;border-radius:50%"></div>
<div class="t" style="left:910.0px;top:540.2px;font-size:16px;color:#8a8a8a;font-weight:400;">Auto</div>
<div class="t" style="left:827.0px;width:20px;text-align:center;top:565.0px;font-size:10.5px;color:#777;font-weight:400;">3</div>
<div class="t" style="left:845.0px;width:20px;text-align:center;top:565.0px;font-size:10.5px;color:#777;font-weight:400;">4</div>
<div class="t" style="left:863.0px;width:20px;text-align:center;top:565.0px;font-size:10.5px;color:#777;font-weight:400;">7</div>
<svg style="left:0;top:0" width="1137" height="711"><path d="M876.5 586.9H884.3V630.3H876.5V598Q873 599.6 869.1 600V593.6Q874 592 876.5 586.9Z" fill="#174a66"/></svg>
<svg style="left:0;top:0" width="1137" height="711"><g stroke="#6e6e6e" stroke-width="1" fill="none"><polygon points="1034.4,548.0 1073.4,576.3 1058.5,622.2 1010.3,622.2 995.4,576.3"/><polygon points="1034.4,561.5 1060.6,580.5 1050.6,611.2 1018.2,611.2 1008.2,580.5"/><polygon points="1034.4,575.3 1047.4,584.8 1042.5,600.1 1026.3,600.1 1021.4,584.8"/><path d="M1034.4 589.0L1034.4 548.0"/><path d="M1034.4 589.0L1073.4 576.3"/><path d="M1034.4 589.0L1058.5 622.2"/><path d="M1034.4 589.0L1010.3 622.2"/><path d="M1034.4 589.0L995.4 576.3"/><path d="M1034.4 543V548M1031.4 543H1037.4"/></g><circle cx="1034.4" cy="589.0" r="1.6" fill="#138080"/><circle cx="1042.5" cy="600" r="1.6" fill="#138080"/></svg>
<div class="t" style="left:986.0px;top:569.3px;font-size:9px;color:#707070;font-weight:400;transform:scaleX(0.85);transform-origin:0 0">°C</div>
<div class="t" style="left:1070.0px;top:569.3px;font-size:9px;color:#707070;font-weight:400;transform:scaleX(0.85);transform-origin:0 0">BP-S</div>
<div class="t" style="left:1001.0px;top:618.3px;font-size:9px;color:#707070;font-weight:400;transform:scaleX(0.85);transform-origin:0 0">HR</div>
<div class="t" style="left:1057.0px;top:618.3px;font-size:9px;color:#707070;font-weight:400;transform:scaleX(0.85);transform-origin:0 0">RR</div>
<div class="b" style="left:14px;top:648px;width:123px;height:60px;background:#0b0b0b;border-radius:9px"></div>
<div class="t" style="left:-4.5px;width:160px;text-align:center;top:683.9px;font-size:14.1px;color:#6e6e6e;font-weight:400;">Main Menu</div>
<div class="b" style="left:155px;top:648px;width:123px;height:60px;background:#0b0b0b;border-radius:9px"></div>
<div class="t" style="left:136.8px;width:160px;text-align:center;top:683.9px;font-size:14.1px;color:#6e6e6e;font-weight:400;">Alarm Reset</div>
<div class="b" style="left:297px;top:648px;width:123px;height:60px;background:#0b0b0b;border-radius:9px"></div>
<div class="t" style="left:278.1px;width:160px;text-align:center;top:683.9px;font-size:14.1px;color:#6e6e6e;font-weight:400;">Alarm Audio Pause</div>
<div class="b" style="left:438px;top:648px;width:123px;height:60px;background:#0b0b0b;border-radius:9px"></div>
<div class="t" style="left:419.4px;width:160px;text-align:center;top:683.9px;font-size:14.1px;color:#6e6e6e;font-weight:400;">Lock Screen</div>
<div class="b" style="left:579px;top:648px;width:123px;height:60px;background:#0b0b0b;border-radius:9px"></div>
<div class="t" style="left:560.7px;width:160px;text-align:center;top:683.9px;font-size:14.1px;color:#6e6e6e;font-weight:400;">Start NIBP</div>
<div class="b" style="left:720px;top:648px;width:123px;height:60px;background:#0b0b0b;border-radius:9px"></div>
<div class="t" style="left:702.0px;width:160px;text-align:center;top:683.9px;font-size:14.1px;color:#6e6e6e;font-weight:400;">Review</div>
<div class="b" style="left:862px;top:648px;width:123px;height:60px;background:#0b0b0b;border-radius:9px"></div>
<div class="t" style="left:843.3px;width:160px;text-align:center;top:683.9px;font-size:14.1px;color:#6e6e6e;font-weight:400;">Freeze Wave</div>
<div class="b" style="left:1003px;top:648px;width:123px;height:60px;background:#0b0b0b;border-radius:9px"></div>
<div class="t" style="left:984.6px;width:160px;text-align:center;top:683.9px;font-size:14.1px;color:#6e6e6e;font-weight:400;">More</div>
<svg style="left:0;top:0" width="1137" height="711"><rect x="65.6" y="654.4" width="20.2" height="16.6" rx="4.5" fill="none" stroke="#666" stroke-width="1.3"/><rect x="68.5" y="658.4" width="14.3" height="9.3" rx="1.2" fill="#666"/><g stroke="#666" fill="none"><path d="M211.3 670L218 657.3L225 670" stroke-width="1.5"/><path d="M210 670.3H226.5" stroke-width="2"/><path d="M221 654.5Q227 657 227.5 664.5" stroke-width="1.4"/><path d="M207 668.5H212" stroke-width="1.2"/></g><circle cx="208" cy="661" r="0.9" fill="#666"/><circle cx="211.6" cy="661" r="1.1" fill="#666"/><g stroke="#666" fill="none" stroke-width="1.4" stroke-linecap="round"><path d="M349.5 654L366.5 671.5M366.5 654L349.5 671.5"/><path d="M350 667Q354 656 358 655Q362 656 366 667Z"/><circle cx="358" cy="662" r="1.2"/></g><circle cx="358" cy="670.3" r="1" fill="#666"/><circle cx="499.5" cy="662.7" r="10.5" fill="#5e5e5e"/><rect x="495" y="660.8" width="9.4" height="6.6" fill="none" stroke="#0b0b0b" stroke-width="1.2"/><path d="M497.2 660.5v-1.2a2.4 2.4 0 0 1 4.8 0v1.2" stroke="#0b0b0b" stroke-width="1.2" fill="none"/><circle cx="499.6" cy="664.2" r="1.1" fill="#0b0b0b"/><path d="M631.3 661.3L634.5 657L641.5 661L638.8 665.6Z" fill="#666"/><path d="M633.5 660.5l1.6-1.6" stroke="#0b0b0b" stroke-width="1.3"/><path d="M640.5 662.5L646 660.3L648 661.3L651 662.5L650 664.8L643 664.5M640 664.5L646.5 668.5" fill="none" stroke="#666" stroke-width="1.3"/><rect x="772.3" y="653.2" width="19.2" height="19.6" rx="2.5" fill="none" stroke="#666" stroke-width="1.9"/><path d="M774.5 660.3h4.5l1.6-4.5 1.6 6 1.6-2.5 1.3 1h4.5" stroke="#666" stroke-width="1.2" fill="none"/><path d="M775 664.8h14M775 667.5h14M775 670h14" stroke="#666" stroke-width="1.3" stroke-dasharray="3 1 5 1 4"/><path d="M923 663L923.00 653.00M923.00 656.50L920.56 653.59M923.00 656.50L925.44 653.59M923 663L914.34 658.00M917.37 659.75L913.63 660.41M917.37 659.75L916.07 656.18M923 663L914.34 668.00M917.37 666.25L916.07 669.82M917.37 666.25L913.63 665.59M923 663L923.00 673.00M923.00 669.50L925.44 672.41M923.00 669.50L920.56 672.41M923 663L931.66 668.00M928.63 666.25L932.37 665.59M928.63 666.25L929.93 669.82M923 663L931.66 658.00M928.63 659.75L929.93 656.18M928.63 659.75L932.37 660.41" stroke="#666" stroke-width="1.7" fill="none" stroke-linecap="round"/><path d="M1064.5 652.3L1075 659.6L1064.5 665.7L1054 659.6Z" fill="#666" stroke="#666" stroke-width="0.8" stroke-linejoin="round"/><path d="M1054 663.5L1064.5 669.5L1075 663.5M1054 667L1064.5 673L1075 667" fill="none" stroke="#666" stroke-width="1.6"/></svg>
<div class="b" style="left:23px;top:55px;width:88px;height:543px;background:rgba(32,36,35,0.95);border-radius:16px"></div>
<div class="b" style="left:26px;top:368px;width:82px;height:36.5px;background:#d3d8d6;border-radius:18px"></div>
<div class="t" style="left:17.0px;width:100px;text-align:center;top:79.5px;font-size:13.9px;color:#abafae;font-weight:400;">Patients</div>
<div class="t" style="left:17.0px;width:100px;text-align:center;top:139.8px;font-size:13.9px;color:#abafae;font-weight:400;">Alarms</div>
<div class="t" style="left:17.0px;width:100px;text-align:center;top:199.7px;font-size:13.9px;color:#abafae;font-weight:400;">Screens</div>
<div class="t" style="left:17.0px;width:100px;text-align:center;top:260.0px;font-size:13.9px;color:#abafae;font-weight:400;">Parameters</div>
<div class="t" style="left:17.0px;width:100px;text-align:center;top:320.0px;font-size:13.9px;color:#abafae;font-weight:400;">System</div>
<div class="t" style="left:17.0px;width:100px;text-align:center;top:379.5px;font-size:13.4px;color:#4a4e4d;font-weight:400;">Review</div>
<div class="t" style="left:17.0px;width:100px;text-align:center;top:440.6px;font-size:13.9px;color:#abafae;font-weight:400;">Reports</div>
<div class="t" style="left:17.0px;width:100px;text-align:center;top:501.8px;font-size:13.9px;color:#abafae;font-weight:400;">Calculations</div>
<div class="t" style="left:17.0px;width:100px;text-align:center;top:562.0px;font-size:13.9px;color:#abafae;font-weight:400;">Maint.</div>
<div class="b" style="left:129px;top:55px;width:618px;height:543.5px;background:rgba(29,33,32,0.955);border-radius:16px"></div>
<div class="b" style="left:143px;top:69px;width:129px;height:35px;border:2px solid #f0f0f0;border-radius:18px"></div>
<div class="t" style="left:161.0px;top:80.2px;font-size:14.1px;color:#f4f4f4;font-weight:400;-webkit-text-stroke:0.2px #f4f4f4">Tabular Trends</div>
<div class="t" style="left:290.0px;top:81.3px;font-size:13.8px;color:#a9adac;font-weight:400;">Graphic Trends</div>
<div class="t" style="left:419.0px;top:81.4px;font-size:13.7px;color:#a9adac;font-weight:400;">Events</div>
<div class="t" style="left:496.0px;top:81.2px;font-size:14px;color:#a9adac;font-weight:400;">Full Disclosure</div>
<div class="t" style="left:623.0px;top:81.3px;font-size:13.8px;color:#a9adac;font-weight:400;">ST</div>
<div class="t" style="left:676px;top:81.2px;font-size:14px;color:#a9adac;width:20.5px;overflow:hidden">Scr</div>
<svg style="left:0;top:0" width="1137" height="711"><path d="M714 75.2L728 89.5M728 75.2L714 89.5" stroke="#fafafa" stroke-width="2.5" stroke-linecap="round"/></svg>
<div class="b" style="left:143px;top:126px;width:589px;height:35px;background:rgba(255,255,255,0.128);border-radius:18px"></div>
<div class="t" style="left:157.5px;top:137.8px;font-size:13.8px;color:#9a9e9d;font-weight:400;">All Parameters</div>
<div class="t" style="left:276.0px;top:137.8px;font-size:13.8px;color:#9a9e9d;font-weight:400;">NIBP List</div>
<div class="t" style="left:362.0px;top:137.7px;font-size:13.9px;color:#f2f2f2;font-weight:400;-webkit-text-stroke:0.2px #f2f2f2">NIBP Analysis</div>
<div class="b" style="left:143px;top:187px;width:590px;height:93px;background:rgba(255,255,255,0.106);border-radius:10px"></div>
<div class="t" style="left:160.5px;top:207.4px;font-size:14.1px;color:#ececec;font-weight:400;">Analysis Duration:</div>
<div class="b" style="left:274px;top:201px;width:200px;height:26px;background:rgba(255,255,255,0.11);border-radius:2px"></div>
<div class="t" style="left:224.0px;width:300px;text-align:center;top:207.5px;font-size:13.9px;color:#ececec;font-weight:400;">2024-08-18 15:22</div>
<div class="t" style="left:491.0px;top:207.5px;font-size:14px;color:#ececec;font-weight:400;">--</div>
<div class="b" style="left:520px;top:201px;width:199px;height:26px;background:rgba(255,255,255,0.11);border-radius:2px"></div>
<div class="t" style="left:469.5px;width:300px;text-align:center;top:207.5px;font-size:13.9px;color:#ececec;font-weight:400;">2024-08-19 15:22</div>
<div class="t" style="left:160.5px;top:247.4px;font-size:13.9px;color:#ececec;font-weight:400;">Analysis Period:</div>
<div class="b" style="left:260px;top:240px;width:71px;height:27px;background:rgba(255,255,255,0.11);border-radius:2px"></div>
<div class="t" style="left:278.0px;top:249.0px;font-size:14px;color:#ececec;font-weight:400;">All</div>
<svg style="left:0;top:0" width="1137" height="711"><path d="M318.5 251.5l3 3 3-3" stroke="#e0e0e0" stroke-width="1.2" fill="none"/></svg>
<div class="t" style="left:160.5px;top:304.3px;font-size:14px;color:#ececec;font-weight:400;">Number of recordings:</div>
<div class="t" style="left:316.0px;top:304.3px;font-size:14px;color:#ececec;font-weight:400;">2</div>
<div class="t" style="left:460.5px;top:304.2px;font-size:14.1px;color:#ececec;font-weight:400;">Valid recording time:</div>
<div class="t" style="left:606.0px;top:304.3px;font-size:14px;color:#ececec;font-weight:400;">06:21:28</div>
<div class="b" style="left:143px;top:342px;width:590px;height:183px;background:rgba(255,255,255,0.1);border-radius:10px"></div>
<svg style="left:0;top:0" width="1137" height="711"><text x="430" y="389" font-family="Liberation Sans" font-size="46" textLength="262" lengthAdjust="spacingAndGlyphs" fill="none" stroke="rgba(255,255,255,0.035)" stroke-width="1.2">Demo Mode</text></svg>
<div class="b" style="left:143px;top:376.5px;width:590px;height:2.0px;background:#5a5e5d"></div>
<div class="b" style="left:143px;top:413.5px;width:590px;height:2.0px;background:#5a5e5d"></div>
<div class="b" style="left:143px;top:450.5px;width:590px;height:2.0px;background:#5a5e5d"></div>
<div class="b" style="left:143px;top:487.5px;width:590px;height:2.0px;background:#5a5e5d"></div>
<div class="t" style="left:229.7px;width:120px;text-align:center;top:353.6px;font-size:13.8px;color:#e6e6e6;font-weight:400;">Min</div>
<div class="t" style="left:328.0px;width:120px;text-align:center;top:353.6px;font-size:13.8px;color:#e6e6e6;font-weight:400;">Average</div>
<div class="t" style="left:426.0px;width:120px;text-align:center;top:353.6px;font-size:13.8px;color:#e6e6e6;font-weight:400;">Max</div>
<div class="t" style="left:524.0px;width:120px;text-align:center;top:353.6px;font-size:13.8px;color:#e6e6e6;font-weight:400;">SD</div>
<div class="t" style="left:623.0px;width:120px;text-align:center;top:353.6px;font-size:13.8px;color:#e6e6e6;font-weight:400;">CV</div>
<div class="t" style="left:160.5px;top:390.1px;font-size:13.8px;color:#e6e6e6;font-weight:400;">SYS</div>
<div class="t" style="left:229.7px;width:120px;text-align:center;top:390.0px;font-size:13.9px;color:#e6e6e6;font-weight:400;">115.0</div>
<div class="t" style="left:328.0px;width:120px;text-align:center;top:390.0px;font-size:13.9px;color:#e6e6e6;font-weight:400;">115.0</div>
<div class="t" style="left:426.0px;width:120px;text-align:center;top:390.0px;font-size:13.9px;color:#e6e6e6;font-weight:400;">115.0</div>
<div class="t" style="left:524.0px;width:120px;text-align:center;top:390.0px;font-size:13.9px;color:#e6e6e6;font-weight:400;">0.0000</div>
<div class="t" style="left:623.0px;width:120px;text-align:center;top:390.0px;font-size:13.9px;color:#e6e6e6;font-weight:400;">0.0000</div>
<div class="t" style="left:160.5px;top:427.4px;font-size:13.8px;color:#e6e6e6;font-weight:400;">DIA</div>
<div class="t" style="left:229.7px;width:120px;text-align:center;top:427.3px;font-size:13.9px;color:#e6e6e6;font-weight:400;">77.0</div>
<div class="t" style="left:328.0px;width:120px;text-align:center;top:427.3px;font-size:13.9px;color:#e6e6e6;font-weight:400;">77.0</div>
<div class="t" style="left:426.0px;width:120px;text-align:center;top:427.3px;font-size:13.9px;color:#e6e6e6;font-weight:400;">77.0</div>
<div class="t" style="left:524.0px;width:120px;text-align:center;top:427.3px;font-size:13.9px;color:#e6e6e6;font-weight:400;">0.0000</div>
<div class="t" style="left:623.0px;width:120px;text-align:center;top:427.3px;font-size:13.9px;color:#e6e6e6;font-weight:400;">0.0000</div>
<div class="t" style="left:160.5px;top:464.4px;font-size:13.8px;color:#e6e6e6;font-weight:400;">MAP</div>
<div class="t" style="left:229.7px;width:120px;text-align:center;top:464.3px;font-size:13.9px;color:#e6e6e6;font-weight:400;">88.0</div>
<div class="t" style="left:328.0px;width:120px;text-align:center;top:464.3px;font-size:13.9px;color:#e6e6e6;font-weight:400;">88.0</div>
<div class="t" style="left:426.0px;width:120px;text-align:center;top:464.3px;font-size:13.9px;color:#e6e6e6;font-weight:400;">88.0</div>
<div class="t" style="left:524.0px;width:120px;text-align:center;top:464.3px;font-size:13.9px;color:#e6e6e6;font-weight:400;">0.0000</div>
<div class="t" style="left:623.0px;width:120px;text-align:center;top:464.3px;font-size:13.9px;color:#e6e6e6;font-weight:400;">0.0000</div>
<div class="t" style="left:160.5px;top:501.4px;font-size:13.8px;color:#e6e6e6;font-weight:400;">PR</div>
<div class="t" style="left:229.7px;width:120px;text-align:center;top:501.3px;font-size:13.9px;color:#e6e6e6;font-weight:400;">85</div>
<div class="t" style="left:328.0px;width:120px;text-align:center;top:501.3px;font-size:13.9px;color:#e6e6e6;font-weight:400;">85</div>
<div class="t" style="left:426.0px;width:120px;text-align:center;top:501.3px;font-size:13.9px;color:#e6e6e6;font-weight:400;">85</div>
<div class="t" style="left:524.0px;width:120px;text-align:center;top:501.3px;font-size:13.9px;color:#e6e6e6;font-weight:400;">0.00</div>
<div class="t" style="left:623.0px;width:120px;text-align:center;top:501.3px;font-size:13.9px;color:#e6e6e6;font-weight:400;">0.00</div>
<div class="t" style="left:160.5px;top:550.4px;font-size:13.8px;color:#ececec;font-weight:400;">SYS Load:0.0%(&gt;160mmHg)</div>
<div class="t" style="left:438.0px;top:550.4px;font-size:13.8px;color:#ececec;font-weight:400;">DIA Load:0.0%(&gt;90mmHg)</div>
</div></body></html>
